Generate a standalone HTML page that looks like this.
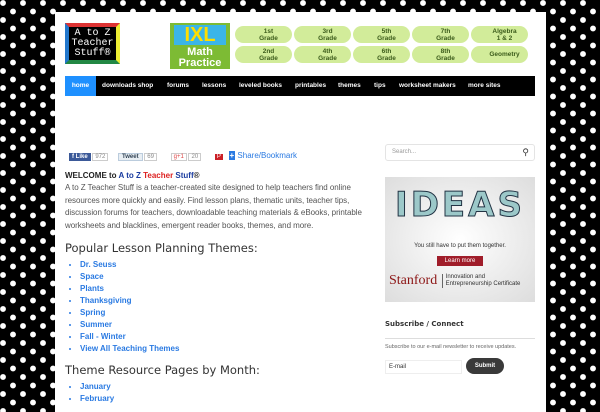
<!DOCTYPE html>
<html><head><meta charset="utf-8"><style>
*{margin:0;padding:0;box-sizing:border-box}
body{width:600px;height:400px;overflow:hidden;background-color:#000;
background-image:radial-gradient(circle at 3px 3px,#fff 2.6px,transparent 3.2px),radial-gradient(circle at 13px 11.5px,#fff 2.6px,transparent 3.2px);
background-size:20px 17px;font-family:"Liberation Sans",sans-serif;position:relative}
#page{position:absolute;left:55px;top:12px;width:491px;height:400px;background:#fff}
.abs{position:absolute}
#logo{left:10px;top:11px;width:55px;height:41px;background:#000;border:4px solid;border-color:#d33 #ee3 #284 #27c}
#logo span{display:block;color:#fff;font:10px/10px "Liberation Mono",monospace;text-align:center;margin-top:2px}
#ad{left:115px;top:11px;width:365px;height:46px;background:#fff}
#ixl{left:0;top:0;width:60px;height:46px;background:#7dbb34;color:#fff;font:bold 11px/11px "Liberation Sans";text-align:center}
.pill{position:absolute;width:57px;height:17px;background:#d2ec9a;border-radius:9px;font:bold 6.5px/7px "Liberation Sans";color:#3b5b1a;text-align:center;padding-top:2px;padding-left:10px}
#nav{left:10px;top:64px;width:470px;height:20px;background:#000;color:#fff;font:bold 6.5px/20px "Liberation Sans"}
#nav span{position:absolute;top:0}
#home{background:#1e90ff;left:0;width:31px;text-align:center}
.main{left:10px;top:141px;width:305px;font-size:8px;color:#555}
h3{font:11.5px "DejaVu Sans",sans-serif;color:#333;margin:8px 0 4px}
ul{margin-left:15px;list-style:disc;color:#555}
li{font:bold 8px/12px "Liberation Sans";color:#2a7ae2}
</style></head><body>
<div id="page">
 <div id="logo" class="abs"><span>A to Z<br>Teacher<br>Stuff®</span></div>
 <div id="ad" class="abs">
  <div id="ixl" class="abs"><div style="font-size:20px;line-height:20px;margin:2px 4px;color:#ffde00;background:#3bb5e8">IXL</div>Math<br>Practice</div>
  <div class="pill" style="left:65px;top:3px">1st<br>Grade</div>
  <div class="pill" style="left:124px;top:3px">3rd<br>Grade</div>
  <div class="pill" style="left:183px;top:3px">5th<br>Grade</div>
  <div class="pill" style="left:242px;top:3px">7th<br>Grade</div>
  <div class="pill" style="left:301px;top:3px">Algebra<br>1 &amp; 2</div>
  <div class="pill" style="left:65px;top:23px">2nd<br>Grade</div>
  <div class="pill" style="left:124px;top:23px">4th<br>Grade</div>
  <div class="pill" style="left:183px;top:23px">6th<br>Grade</div>
  <div class="pill" style="left:242px;top:23px">8th<br>Grade</div>
  <div class="pill" style="left:301px;top:23px;line-height:13px">Geometry</div>
 </div>
 <div id="nav" class="abs">
  <span id="home">home</span><span style="left:37px">downloads shop</span><span style="left:102px">forums</span><span style="left:137px">lessons</span><span style="left:174px">leveled books</span><span style="left:230px">printables</span><span style="left:273px">themes</span><span style="left:309px">tips</span><span style="left:334px">worksheet makers</span><span style="left:403px">more sites</span>
 </div>
 <div class="abs" style="left:14px;top:139px;font-size:6px;color:#888;white-space:nowrap">
  <span style="background:#3b5998;color:#fff;padding:1px 3px;font-weight:bold">f Like</span> <span style="border:1px solid #ccc;padding:0 2px">972</span>
  <span style="margin-left:8px;background:#e8eef3;border:1px solid #bcd;color:#345;padding:0 3px;font-weight:bold">Tweet</span> <span style="border:1px solid #ccc;padding:0 2px">69</span>
  <span style="margin-left:12px;border:1px solid #ccc;color:#d44;padding:0 2px">g+1</span> <span style="border:1px solid #ccc;padding:0 2px">20</span>
  <span style="margin-left:12px;background:#cb2027;color:#fff;padding:0 2px">P</span>
  <span style="margin-left:4px;color:#2a7ae2;font-size:8px"><b style="background:#2a7ae2;color:#fff;padding:0 1px">+</b> Share/Bookmark</span>
 </div>
 <div class="abs main">
  <div style="font-weight:bold;color:#222;font-size:8px;margin-top:18px">WELCOME to <span style="color:#1a3ca0">A to Z</span> <span style="color:#d22">Teacher</span> <span style="color:#1a3ca0">Stuff</span>®</div>
  <div style="line-height:12.5px;margin-top:2px;letter-spacing:-0.05px">A to Z Teacher Stuff is a teacher-created site designed to help teachers find online resources more quickly and easily. Find lesson plans, thematic units, teacher tips, discussion forums for teachers, downloadable teaching materials &amp; eBooks, printable worksheets and blacklines, emergent reader books, themes, and more.</div>
  <h3 style="margin-top:9px">Popular Lesson Planning Themes:</h3>
  <ul><li>Dr. Seuss</li><li>Space</li><li>Plants</li><li>Thanksgiving</li><li>Spring</li><li>Summer</li><li>Fall - Winter</li><li>View All Teaching Themes</li></ul>
  <h3>Theme Resource Pages by Month:</h3>
  <ul><li>January</li><li>February</li></ul>
 </div>
 <div class="abs" style="left:330px;top:132px;width:150px;height:17px;border:1px solid #e4e4e4;border-radius:3px;font-size:6px;color:#999;padding:4px 6px">Search...<span style="position:absolute;right:5px;top:2px;color:#333;font-size:9px">&#x26B2;</span></div>
 <div class="abs" style="left:330px;top:165px;width:150px;height:125px;background:radial-gradient(#fff,#ddd);text-align:center">
  <div style="font:bold 34px/40px 'DejaVu Sans',sans-serif;color:#9cc8c9;margin-top:8px;letter-spacing:3px;-webkit-text-stroke:1px #234">IDEAS</div>
  <div style="font-size:6px;color:#333;margin-top:18px">You still have to put them together.</div>
  <div style="display:inline-block;background:#a01d2a;color:#fff;font-size:6px;padding:2px 8px;margin-top:5px">Learn more</div>
  <div style="text-align:left;margin-top:5px;padding-left:4px;white-space:nowrap"><span style="font:14px 'Liberation Serif',serif;color:#8c1515;vertical-align:middle">Stanford</span> <span style="display:inline-block;border-left:1px solid #666;padding-left:3px;font-size:6px;color:#333;vertical-align:middle;line-height:7px">Innovation and<br>Entrepreneurship Certificate</span></div>
 </div>
 <div class="abs" style="left:330px;top:308px;font:bold 7px 'DejaVu Sans',sans-serif;color:#333">Subscribe / Connect</div>
 <div class="abs" style="left:330px;top:326px;width:150px;border-top:1px solid #ddd"></div>
 <div class="abs" style="left:330px;top:332px;font-size:5.5px;color:#666">Subscribe to our e-mail newsletter to receive updates.</div>
 <div class="abs" style="left:330px;top:348px;width:77px;height:14px;border:1px solid #eee;font-size:6px;color:#333;padding:3px">E-mail</div>
 <div class="abs" style="left:411px;top:346px;width:38px;height:16px;background:#3a3a3a;border-radius:8px;color:#fff;font:bold 6px/16px 'Liberation Sans';text-align:center">Submit</div>
</div>
</body></html>
